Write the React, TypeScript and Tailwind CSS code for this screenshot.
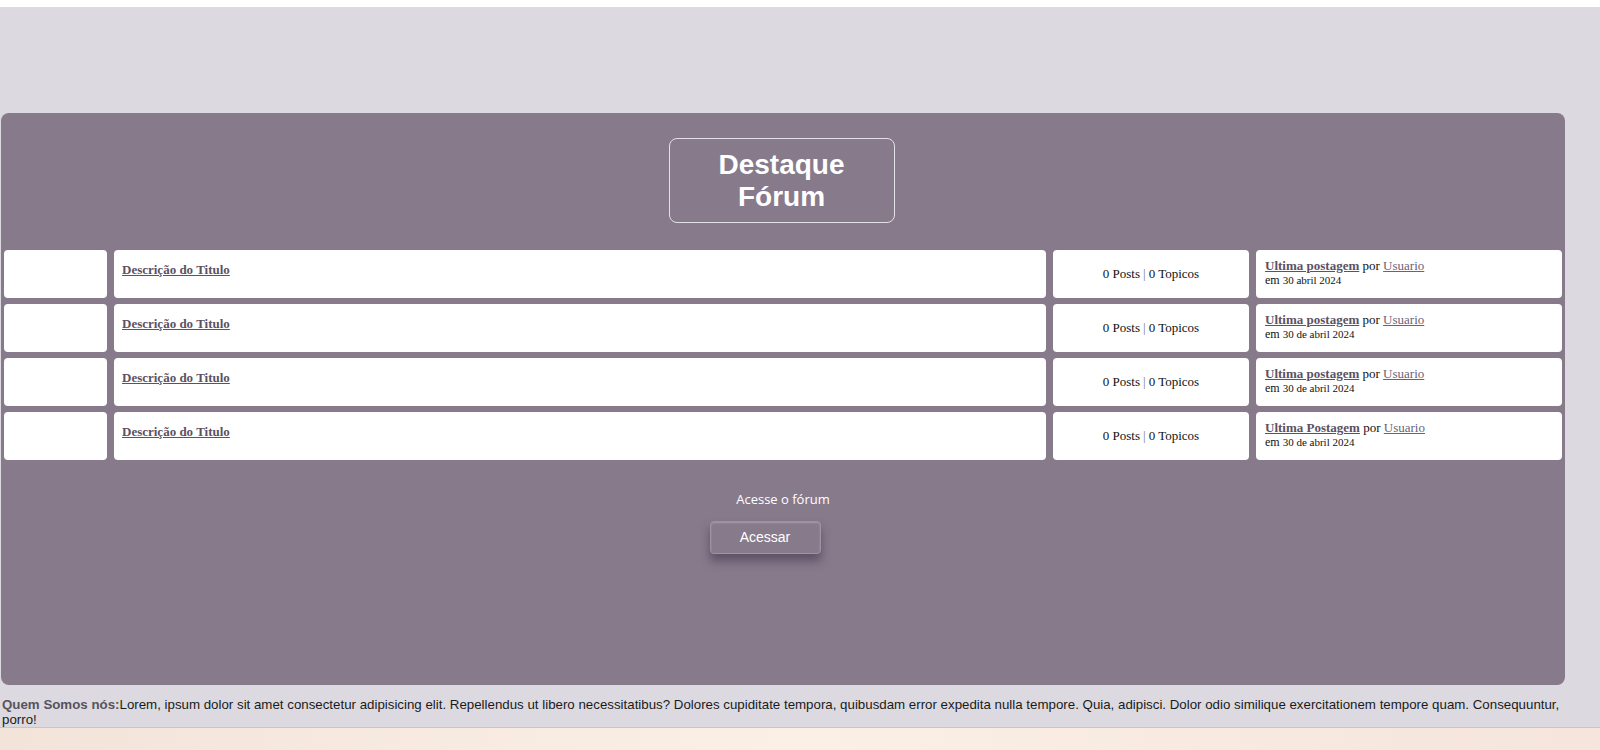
const rows = [
  { last: "Ultima postagem", date: "30 abril 2024" },
  { last: "Ultima postagem", date: "30 de abril 2024" },
  { last: "Ultima postagem", date: "30 de abril 2024" },
  { last: "Ultima Postagem", date: "30 de abril 2024" },
];

function ForumRow({ last, date }: { last: string; date: string }) {
  return (
    <>
      <div className="h-[48px] rounded-[4px] bg-white" />
      <div className="h-[48px] rounded-[4px] bg-white px-2 pt-[7px]">
        <a href="#" className="font-bold text-[13px] text-[#5b5264] underline">
          Descrição do Titulo
        </a>
      </div>
      <div className="h-[48px] rounded-[4px] bg-white flex items-center justify-center text-[13px] text-[#111]">
        0 Posts <span className="text-[#777] mx-[3px]">|</span> 0 Topicos
      </div>
      <div className="h-[48px] rounded-[4px] bg-white px-[9px] pt-[8px] leading-[15px] text-[#111]">
        <div className="text-[13px]">
          <a href="#" className="font-bold text-[#5b5264] underline">
            {last}
          </a>{" "}
          por{" "}
          <a href="#" className="text-[#6b6274] underline">
            Usuario
          </a>
        </div>
        <div className="text-[12px]">
          em <span className="text-[11px]">{date}</span>
        </div>
      </div>
    </>
  );
}

export default function App() {
  return (
    <div className="min-h-[750px] bg-white font-['Liberation_Serif',serif]">
      <div className="h-[7px] bg-white" />
      <div className="bg-[#dcdae0] pt-[106px]">
        <section className="ml-[1px] w-[1564px] h-[572px] rounded-[8px] bg-[#877a8b] px-[3px] pt-[25px]">
          <div className="flex justify-center">
            <div className="w-[226px] h-[85px] ml-[-3px] rounded-[8px] border border-[#e4e0e8] flex items-center justify-center text-center font-['Liberation_Sans',Arial,sans-serif] font-bold text-[28px] leading-[32px] text-white">
              Destaque
              <br />
              Fórum
            </div>
          </div>
          <div className="mt-[27px] grid grid-cols-[103px_932px_196px_306px] gap-x-[7px] gap-y-[6px]">
            {rows.map((r, i) => (
              <ForumRow key={i} last={r.last} date={r.date} />
            ))}
          </div>
          <div className="mt-[30px] flex flex-col items-center font-['Open_Sans',sans-serif] text-white">
            <p className="text-[13px] leading-[18px]">Acesse o fórum</p>
            <button className="mt-[13px] w-[111px] h-[33px] ml-[-36px] rounded-[4px] bg-[#877a8b] border border-[#9d93a2] shadow-[0_7px_10px_rgba(55,40,65,0.5),inset_0_1px_2px_rgba(255,255,255,0.25)] font-['Liberation_Sans',Arial,sans-serif] text-[14px] text-white">
              Acessar
            </button>
          </div>
        </section>
        <footer className="border-b border-[#c8c4cc]">
          <p className="w-[1568px] px-[2px] pt-[12px] font-['Liberation_Sans',Arial,sans-serif] text-[13.3px] leading-[15px] text-[#1a1a1a]">
            <strong className="text-[#58535c]">Quem Somos nós:</strong>Lorem, ipsum dolor sit amet consectetur adipisicing elit. Repellendus ut libero necessitatibus? Dolores cupiditate tempora, quibusdam error expedita nulla tempore. Quia, adipisci. Dolor odio similique exercitationem tempore quam. Consequuntur, porro!
          </p>
        </footer>
      </div>
      <div className="h-[30px] bg-gradient-to-r from-[#f3e4da] via-[#fbefe6] to-[#f5e5dc]" />
    </div>
  );
}
